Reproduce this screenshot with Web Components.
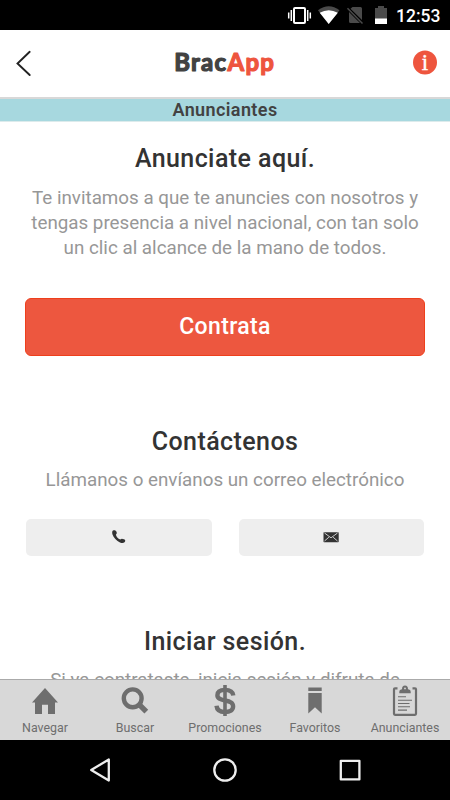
<!DOCTYPE html>
<html lang="es">
<head>
<meta charset="utf-8">
<meta name="viewport" content="width=device-width, initial-scale=1">
<title>BracApp</title>
<style>
  body {
    margin: 0;
    font-family: Roboto, "Liberation Sans", sans-serif;
    background: #fff;
  }
</style>
</head>
<body>
<brac-app></brac-app>

<script>
class StatusBar extends HTMLElement {
  constructor() {
    super();
    this.attachShadow({ mode: 'open' });
  }

  connectedCallback() {
    this.shadowRoot.innerHTML = `
      <style>
        :host {
          display: flex;
          align-items: center;
          justify-content: flex-end;
          height: 30px;
          box-sizing: border-box;
          padding-right: 10px;
          background: #000;
          color: #fff;
        }

        .time {
          width: 44px;
          font-size: 17.5px;
          font-weight: 500;
          line-height: 30px;
          white-space: nowrap;
          padding-top: 2px;
        }
      </style>
      <svg width="116" height="30" viewBox="280 0 116 30">
        <rect x="294" y="8" width="11" height="15" rx="1" fill="none" stroke="#fff" stroke-width="2"/>
        <path d="M291.3 10v11M307.7 10v11M288.7 12.5v6M310.3 12.5v6" stroke="#fff" stroke-width="1.5"/>
        <path d="M318 10.2Q328.7 2.5 339.5 10.2L328.7 24Z" fill="#4a4a4a"/>
        <path d="M319.7 12.8Q328.7 7.6 337.8 12.8L328.7 24Z" fill="#fff"/>
        <path d="M352.5 7H360.5Q362 7 362 8.5V20L350.5 8.7ZM349 12L360 23H350.5Q349 23 349 21.5Z" fill="#4a4a4a"/>
        <path d="M347.5 8.3L362.5 23.5" stroke="#4a4a4a" stroke-width="1.5"/>
        <path d="M375 8H378V6H384V8H387V19H375Z" fill="#4a4a4a"/>
        <path d="M375 18.5H387V24H375Z" fill="#fff"/>
      </svg>
      <span class="time">12:53</span>
    `;
  }
}

customElements.define('status-bar', StatusBar);

class AppHeader extends HTMLElement {
  constructor() {
    super();
    this.attachShadow({ mode: 'open' });
  }

  connectedCallback() {
    this.shadowRoot.innerHTML = `
      <style>
        :host {
          display: flex;
          align-items: center;
          justify-content: space-between;
          height: 69px;
          box-sizing: border-box;
          padding: 0 13px 2px 15px;
          border-bottom: 2px solid #d8d8d8;
        }

        svg {
          display: block;
        }

        .brand {
          font-family: Lato, sans-serif;
          font-size: 24px;
          font-weight: 700;
          stroke-width: 1.2;
          stroke-linejoin: round;
        }

        .info text {
          font-family: "Liberation Serif", serif;
          font-size: 23px;
          fill: #fff;
          stroke: #fff;
          stroke-width: 0.4;
        }
      </style>
      <svg width="22" height="28" viewBox="0 0 22 28">
        <path d="M14.7 2.8L2.5 14.5L14.7 26" fill="none" stroke="#222" stroke-width="1.9" stroke-linecap="round"/>
      </svg>
      <svg class="brand" width="104" height="36" viewBox="0 0 104 36">
        <text x="1.2" y="26" textLength="51.8" fill="#424242" stroke="#424242">Brac</text>
        <text x="54.5" y="26" textLength="46.5" fill="#ee553e" stroke="#ee553e">App</text>
      </svg>
      <svg class="info" width="24" height="26" viewBox="0 0 24 26">
        <circle cx="12" cy="12.5" r="12" fill="#ee553e"/>
        <text x="12" y="20.3" text-anchor="middle">i</text>
      </svg>
    `;
  }
}

customElements.define('app-header', AppHeader);

class PageTitle extends HTMLElement {
  constructor() {
    super();
    this.attachShadow({ mode: 'open' });
  }

  connectedCallback() {
    this.shadowRoot.innerHTML = `
      <style>
        :host {
          display: block;
          height: 23px;
          box-sizing: border-box;
          border-bottom: 1px solid #dcebec;
          background: #a7d8df;
          color: #424242;
          font-size: 18px;
          font-weight: 600;
          letter-spacing: 0.4px;
          line-height: 22px;
          text-align: center;
        }
      </style>
      <slot></slot>
    `;
  }
}

customElements.define('page-title', PageTitle);

class InfoSection extends HTMLElement {
  constructor() {
    super();
    this.attachShadow({ mode: 'open' });
  }

  connectedCallback() {
    this.shadowRoot.innerHTML = `
      <style>
        :host {
          display: block;
          padding: 0 25px;
          text-align: center;
        }

        h2 {
          margin: 0 0 11.5px;
          padding-top: 1px;
          color: #333;
          font-size: 25px;
          font-weight: 500;
          letter-spacing: 0.42px;
          line-height: 30px;
        }

        .text {
          color: #979797;
          font-size: 18.8px;
          letter-spacing: 0;
          line-height: 25px;
          white-space: nowrap;
        }
      </style>
      <h2>${this.getAttribute('heading') || ''}</h2>
      <div class="text"><slot></slot></div>
      <slot name="actions"></slot>
    `;
  }
}

customElements.define('info-section', InfoSection);

class PrimaryButton extends HTMLElement {
  constructor() {
    super();
    this.attachShadow({ mode: 'open' });
  }

  connectedCallback() {
    this.shadowRoot.innerHTML = `
      <style>
        :host {
          display: block;
          margin-top: 37px;
        }

        button {
          display: block;
          width: 100%;
          height: 58.5px;
          padding: 0 0 1px;
          border: 1px solid #ee3f1c;
          border-radius: 6px;
          background: #ed573f;
          color: #fff;
          font: 500 23px Roboto, sans-serif;
          letter-spacing: 0.35px;
        }
      </style>
      <button><slot></slot></button>
    `;
  }
}

customElements.define('primary-button', PrimaryButton);

class ContactButtons extends HTMLElement {
  constructor() {
    super();
    this.attachShadow({ mode: 'open' });
  }

  connectedCallback() {
    this.shadowRoot.innerHTML = `
      <style>
        :host {
          display: grid;
          grid-template-columns: 1fr 1fr;
          gap: 27px;
          margin-top: 26px;
          padding: 0 1px;
        }

        button {
          display: flex;
          align-items: center;
          justify-content: center;
          height: 37px;
          padding: 0 0 2px;
          border: 0;
          border-radius: 5px;
          background: #eee;
        }
      </style>
      <button aria-label="Llamar">
        <svg width="16" height="16" viewBox="0 0 16 16">
          <path d="M2 1.6C3.4 .8 5 1.4 5.5 2.8 6 4.2 5.9 4.8 4.9 5.5 5.1 7.7 7 9.7 9.3 10.6 10.2 9.6 11.2 9.6 13 10.3 14.6 10.9 14.5 12.3 13.5 13.3 12.6 14.2 10.8 14.3 9 13.4 5.6 11.9 2.5 8.7 1.4 5.3 1 3.7 1.1 2.2 2 1.6Z" fill="#333"/>
        </svg>
      </button>
      <button aria-label="Correo">
        <svg width="16" height="16" viewBox="0 0 16 16">
          <rect x=".5" y="3.2" width="15.2" height="10" rx=".6" fill="#333"/>
          <path d="M1.5 4L8 8.8L14.5 4M1.5 12L5.9 8.2M14.5 12L10.1 8.2" fill="none" stroke="#ddd" stroke-width=".9"/>
        </svg>
      </button>
    `;
  }
}

customElements.define('contact-buttons', ContactButtons);

class TabItem extends HTMLElement {
  constructor() {
    super();
    this.attachShadow({ mode: 'open' });
  }

  connectedCallback() {
    this.shadowRoot.innerHTML = `
      <style>
        :host {
          display: flex;
          flex-direction: column;
          align-items: center;
          flex: 1 1 0;
          min-width: 0;
          padding-top: 4px;
          color: #6e6e6e;
        }

        .label {
          font-size: 12.4px;
          line-height: 16px;
          margin-top: 4px;
          white-space: nowrap;
        }
      </style>
      <slot></slot>
      <span class="label">${this.getAttribute('label') || ''}</span>
    `;
  }
}

customElements.define('tab-item', TabItem);

class TabBar extends HTMLElement {
  constructor() {
    super();
    this.attachShadow({ mode: 'open' });
  }

  connectedCallback() {
    this.shadowRoot.innerHTML = `
      <style>
        :host {
          display: flex;
          height: 61px;
          box-sizing: border-box;
          border-top: 1px solid #aaa;
          background: #d8d8d8;
        }

        svg {
          display: block;
          width: 32px;
          height: 32px;
        }
      </style>
      <tab-item label="Navegar">
        <svg viewBox="0 0 32 32"><path d="M16 4L29 18.5H26V30H19V20.8H13V30H6V18.5H3Z" fill="#6e6e6e"/></svg>
      </tab-item>
      <tab-item label="Buscar">
        <svg viewBox="0 0 32 32">
          <circle cx="13.7" cy="14.3" r="8.9" fill="none" stroke="#6e6e6e" stroke-width="4.4"/>
          <path d="M19 19.3L27.3 27.6" stroke="#6e6e6e" stroke-width="5.4"/>
        </svg>
      </tab-item>
      <tab-item label="Promociones">
        <svg viewBox="0 0 32 32">
          <path d="M24.3 11.5C23.8 7.5 21 5.9 16 5.9 11 5.9 8.4 8 8.4 11.2 8.4 14.5 11 15.5 16 16.5 21.5 17.6 24.1 18.8 24.1 22.5 24.1 26 21 28 16 28 10.7 28 7.9 26 7.5 21.8" fill="none" stroke="#6e6e6e" stroke-width="4.4"/>
          <path d="M16 1V32" stroke="#6e6e6e" stroke-width="3.6"/>
        </svg>
      </tab-item>
      <tab-item label="Favoritos">
        <svg viewBox="0 0 32 32"><path d="M9.3 3.5H22.7V7H9.3ZM9.3 9H22.7V29.5L16 23.3L9.3 29.5Z" fill="#6e6e6e"/></svg>
      </tab-item>
      <tab-item label="Anunciantes">
        <svg viewBox="0 0 32 32">
          <path d="M8.5 4.3H6Q5 4.3 5 5.3V29.8Q5 30.8 6 30.8H26Q27 30.8 27 29.8V5.3Q27 4.3 26 4.3H23.5" fill="none" stroke="#6e6e6e" stroke-width="2.2"/>
          <path d="M10.3 9.2V7.7Q10.3 6 12 5.5L13 5.2Q13 1.5 16 1.5Q19 1.5 19 5.2L20 5.5Q21.7 6 21.7 7.7V9.2Z" fill="#6e6e6e"/>
          <circle cx="16" cy="4.4" r=".9" fill="#d8d8d8"/>
          <path d="M9 12.7H17M9 16.2H23M9 19.5H20.5M9 22.8H21M9 26.1H18" stroke="#6e6e6e" stroke-width="1.1"/>
        </svg>
      </tab-item>
    `;
  }
}

customElements.define('tab-bar', TabBar);

class SystemNav extends HTMLElement {
  constructor() {
    super();
    this.attachShadow({ mode: 'open' });
  }

  connectedCallback() {
    this.shadowRoot.innerHTML = `
      <style>
        :host {
          display: flex;
          align-items: center;
          justify-content: space-between;
          height: 60px;
          box-sizing: border-box;
          padding: 0 86px;
          background: #000;
        }

        svg {
          width: 28px;
          height: 28px;
          fill: none;
          stroke: #eee;
          stroke-width: 2.3;
          stroke-linejoin: round;
        }
      </style>
      <svg viewBox="0 0 28 28"><path d="M22.8 3.5V24.5L5.2 14Z"/></svg>
      <svg viewBox="0 0 28 28"><circle cx="14" cy="14" r="10.7"/></svg>
      <svg viewBox="0 0 28 28"><rect x="4.8" y="4.8" width="18.6" height="18.6"/></svg>
    `;
  }
}

customElements.define('system-nav', SystemNav);

class BracApp extends HTMLElement {
  constructor() {
    super();
    this.attachShadow({ mode: 'open' });
  }

  connectedCallback() {
    this.shadowRoot.innerHTML = `
      <style>
        :host {
          display: flex;
          flex-direction: column;
          width: 450px;
          height: 800px;
          overflow: hidden;
        }

        main {
          display: flex;
          flex-direction: column;
          gap: 69.5px;
          flex: 1;
          min-height: 0;
          padding-top: 21px;
          box-sizing: border-box;
          overflow: hidden;
        }
      </style>
      <status-bar></status-bar>
      <app-header></app-header>
      <page-title>Anunciantes</page-title>
      <main>
        <info-section heading="Anunciate aquí.">
          Te invitamos a que te anuncies con nosotros y<br>
          tengas presencia a nivel nacional, con tan solo<br>
          un clic al alcance de la mano de todos.
          <primary-button slot="actions">Contrata</primary-button>
        </info-section>
        <info-section heading="Contáctenos">
          Llámanos o envíanos un correo electrónico
          <contact-buttons slot="actions"></contact-buttons>
        </info-section>
        <info-section heading="Iniciar sesión.">
          Si ya contrataste, inicia sesión y difruta de
        </info-section>
      </main>
      <tab-bar></tab-bar>
      <system-nav></system-nav>
    `;
  }
}

customElements.define('brac-app', BracApp);
</script>
</body>
</html>
